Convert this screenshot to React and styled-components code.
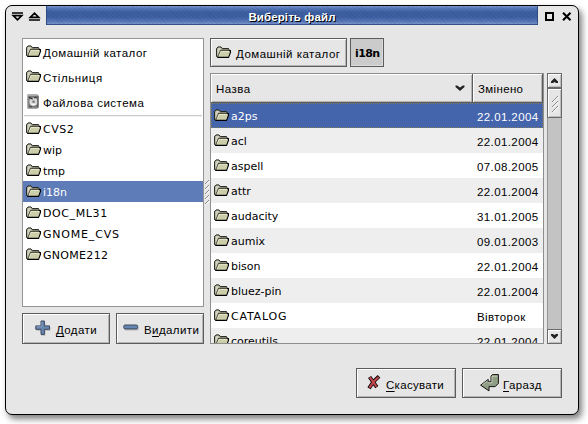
import React from "react";
import styled, { createGlobalStyle, css } from "styled-components";

const Global = createGlobalStyle`
  * { box-sizing: border-box; }
  html, body { margin: 0; background: #fff; }
  body { width: 588px; height: 424px; overflow: hidden; font: 11px "Liberation Sans", sans-serif; color: #000; cursor: default; }
`;

const Frame = styled.div`
  width: 574px;
  height: 410px;
  margin: 5px 0 0 5px;
  display: flex;
  flex-direction: column;
  background: #e6e6e6;
  border: 1px solid #000;
  border-radius: 7px;
  box-shadow: 3px 4px 6px rgba(0, 0, 0, 0.5);
  overflow: hidden;
`;

const TitleBar = styled.header`
  height: 19px;
  display: flex;
  flex: none;
`;

const Controls = styled.div`
  width: 40px;
  flex: none;
  display: flex;
`;

const Caption = styled.div`
  flex: 1;
  padding-top: 2px;
  text-align: center;
  font: bold 11.5px/18px "Liberation Sans", sans-serif;
  letter-spacing: 0.1px;
  color: #fff;
  text-shadow: 1px 1px 0 #000;
  border-left: 1px solid #2e4a86;
  border-right: 1px solid #2e4a86;
  border-bottom: 1px solid #34508c;
  background:
    repeating-linear-gradient(45deg, rgba(20, 45, 110, 0.1) 0 1px, transparent 1px 3px),
    linear-gradient(#7f9ace 0, #5a7bbb 2px, #3e5f9f 6px, #3d5fa0 11px, #5c7cba 16px, #7d97cb 18px);
`;

const Body = styled.main`
  flex: 1;
  padding: 13px 16px 16px;
  display: flex;
  flex-direction: column;
`;

const Panes = styled.div`
  display: grid;
  grid-template-columns: 182px 6px 352px;
  height: 306px;
`;

const SidePane = styled.section`
  display: flex;
  flex-direction: column;
  gap: 6px;
`;

const Places = styled.div`
  height: 269px;
  border: 1px solid #949494;
  background: #fff;
`;

const Divider = styled.div`
  height: 2px;
  margin: 1px 1px;
  background: #cbcbcb;
  border-bottom: 1px solid #f2f2f2;
`;

const Text = styled.span`
  white-space: nowrap;
  font-family: ${(p) => (p.$latin ? '"DejaVu Sans"' : '"Liberation Sans"')}, sans-serif;
  font-size: ${(p) => (p.$latin ? 11 : 11.5)}px;
  letter-spacing: ${(p) => p.$track || 0}px;
  line-height: 15px;
  padding-top: ${(p) => p.$drop || 0}px;
  ${(p) => p.$bold && css`font-weight: bold;`}
  u { text-underline-offset: 2px; text-decoration-thickness: 1px; text-decoration-skip-ink: none; }
`;

const PlaceRow = styled.div`
  height: ${(p) => (p.$tall ? 25 : 21)}px;
  display: flex;
  align-items: center;
  gap: 2px;
  padding-left: 3px;
  ${(p) => p.$selected && css`background: #5e7cb8; color: #fff;`}
`;

const ButtonPair = styled.div`
  display: grid;
  grid-template-columns: 88px 88px;
  gap: 6px;
`;

const Button = styled.button`
  height: ${(p) => p.$h || 31}px;
  width: ${(p) => (p.$w ? `${p.$w}px` : "auto")};
  padding: 0 0 0 ${(p) => p.$pad}px;
  display: flex;
  align-items: center;
  gap: ${(p) => p.$gap ?? 5}px;
  border: 1px solid #5c5c5c;
  border-radius: 0;
  background: ${(p) => (p.$active ? "#cbcbcb" : "#e6e6e6")};
  box-shadow: ${(p) =>
    p.$active ? "inset -1px -1px #dcdcdc" : "inset 1px 1px #fff, inset -1px -1px #b4b4b4"};
  color: #000;
`;

const Splitter = styled.div`
  display: flex;
  align-items: flex-start;
  padding: 142px 0 0 1px;
`;

const FilePane = styled.section`
  display: flex;
  flex-direction: column;
  gap: 6px;
`;

const PathBar = styled.nav`
  display: flex;
  gap: 3px;
`;

const Listing = styled.div`
  display: flex;
  justify-content: space-between;
  height: 271px;
`;

const Table = styled.div`
  width: 334px;
  border: 1px solid #8e8e8e;
  background: #fff;
  overflow: hidden;
`;

const HeadRow = styled.div`
  height: 29px;
  display: grid;
  grid-template-columns: 262px 70px;
`;

const HeadCell = styled.div`
  display: flex;
  align-items: center;
  justify-content: space-between;
  padding: 0 7px 0 5px;
  background: #e6e6e6;
  border-right: 1px solid #5c5c5c;
  border-bottom: 1px solid #5c5c5c;
  box-shadow: inset 1px 1px #fff, inset -1px -1px #b4b4b4;
`;

const FileRow = styled.div`
  height: 25px;
  display: grid;
  grid-template-columns: 263px 69px;
  align-items: center;
  background: ${(p) => (p.$odd ? "#eeeeee" : "#fff")};
  ${(p) => p.$selected && css`background: #4464ac; color: #fff; outline: 1px dotted #7a7a60; outline-offset: -1px;`}
`;

const NameCell = styled.div`
  display: flex;
  align-items: center;
  gap: 2px;
  padding-left: 3px;
`;

const DateCell = styled.div`
  display: flex;
  padding-left: 3px;
`;

const ScrollBar = styled.div`
  width: 15px;
  display: flex;
  flex-direction: column;
  background: #c3c3c3;
  border: solid #949494;
  border-width: 0 1px;
`;

const ScrollPart = styled.div`
  height: ${(p) => p.$h}px;
  margin: 0 -1px;
  margin-top: ${(p) => (p.$end ? "auto" : 0)};
  display: flex;
  align-items: center;
  justify-content: center;
  border: 1px solid #6a6a6a;
  background: #e6e6e6;
  box-shadow: inset 1px 1px #fff, inset -1px -1px #bdbdbd;
`;

const Actions = styled.footer`
  display: flex;
  justify-content: flex-end;
  gap: 6px;
  margin-top: 24px;
`;

const Icon = styled.svg`
  display: block;
  flex: none;
  overflow: visible;
  margin-top: ${(p) => p.$shift || 0}px;
`;

const Folder = ({ shift = 0 }) => (
  <Icon width="15" height="13" viewBox="0 0 15 13" $shift={shift}>
    <path d="M2 11.5L.5 10.5V2.5L2 .9H5L6.5 2.5H12.5L13.5 4.5H5Z" fill="#84866f" stroke="#1c1c18" strokeWidth=".9" />
    <path d="M1.3 9.5V3L2.4 1.7H4.6L6 3.4H4.6L3.6 5.2L2 9.8Z" fill="#d0d1be" />
    <path d="M5.3 4.6H14.3V6.2L12.6 11H3L2 10.6L4.3 5.2Z" fill="#cccea9" />
    <path d="M2.9 10L5 5.2H14" fill="none" stroke="#f1f2da" strokeWidth=".9" />
    <path d="M1.4 11.4H12.6L14.5 6.2V4.6H13" fill="none" stroke="#000" strokeWidth="1.1" strokeLinejoin="round" />
    <path d="M2 10.4L4.4 4.5H13" fill="none" stroke="#33342a" strokeWidth=".7" />
  </Icon>
);

const Disk = () => (
  <Icon width="15" height="15" viewBox="0 0 15 15" $shift={-1}>
    <path d="M1.5 .5H11L12.5 1.5V13.5L11.5 14.5H1.5Z" fill="#777" />
    <path d="M1.5 .5H11.5V2H1.5Z" fill="#aaa" />
    <path d="M2 3V14H11" fill="none" stroke="#9a9a9a" />
    <circle cx="7.4" cy="7.8" r="4" fill="#d8d8d8" />
    <path d="M4 9.5A4 4 0 0 0 10.5 10Z" fill="#f5f5f5" />
    <circle cx="7.6" cy="7.8" r="1.3" fill="#777" />
    <path d="M3 3.2L6.8 5.3M8 4L10.5 3" stroke="#333" strokeWidth="1.3" />
    <path d="M3.4 12.5L6 13" stroke="#444" />
    <path d="M12 2V13.5" stroke="#555" />
  </Icon>
);

const Plus = () => (
  <Icon width="16" height="16" viewBox="0 0 16 16" $shift={-2}>
    <path d="M6.4 2.4H10.4V7H15.5V11H10.4V15.7H6.4V11H1.4V7H6.4Z" fill="#999" opacity=".5" />
    <path d="M6 1H9.4V5.9H14.5V9.3H9.4V14.4H6V9.3H.8V5.9H6Z" fill="#6685b0" stroke="#3d4b60" strokeWidth="1" strokeLinejoin="round" />
    <path d="M6.9 1.8V6.8H1.7" fill="none" stroke="#92abcb" strokeWidth=".7" />
  </Icon>
);

const Minus = () => (
  <Icon width="16" height="7" viewBox="0 0 16 7" $shift={-3}>
    <rect x="1.5" y="2" width="14" height="4.4" rx="1.5" fill="#999" opacity=".6" />
    <rect x=".8" y="1" width="13.8" height="3.9" rx="1.2" fill="#6685b0" stroke="#3d4b60" strokeWidth="1" />
  </Icon>
);

const Cross = () => (
  <Icon width="14" height="15" viewBox="0 0 14 15" $shift={-1}>
    <path d="M2.6 2L9.8 12.2M12 1.4L6.5 6.6L2 13.2" fill="none" stroke="#000" strokeWidth="3.8" strokeLinejoin="round" />
    <path d="M2.9 2.4L9.5 11.7M11.6 2L6.6 6.8L2.4 12.6" fill="none" stroke="#c0484c" strokeWidth="2.2" />
  </Icon>
);

const Enter = () => (
  <Icon width="19" height="18" viewBox="0 0 19 18" $shift={-1}>
    <path d="M11 2L12.5 .6H18.4V9.4L15.2 12.6H9V16.9L.6 11.2L8.2 5.4V7.8H11Z" fill="#8f9d84" stroke="#111" strokeWidth="1" strokeLinejoin="round" />
    <path d="M12 2.2H17.4M12 2V8.8H7.7M7.5 6.9L2.2 11" fill="none" stroke="#c9d1bf" strokeWidth=".9" />
  </Icon>
);

const LeftControls = () => (
  <Icon width="40" height="19" viewBox="0 0 40 19">
    <g fill="none" stroke="#000" strokeWidth="1.7">
      <path d="M6 7H17M7.3 9.7H15.7L11.5 13.8Z" />
      <path d="M24.3 11.3H32.7L28.5 7.2ZM23 14H34" />
    </g>
  </Icon>
);

const RightControls = () => (
  <Icon width="40" height="19" viewBox="0 0 40 19">
    <path d="M8 7H15V14H8Z" fill="none" stroke="#000" strokeWidth="2" />
    <path d="M25 6.7L32.5 14.2M32.5 6.7L25 14.2" stroke="#000" strokeWidth="2.1" />
  </Icon>
);

const Chevron = () => (
  <Icon width="10" height="7" viewBox="0 0 10 7">
    <path d="M.5 .5L2.2 .5L5 2.6L7.8 .5H9.5V2L5 6L.5 2Z" fill="#222" />
  </Icon>
);

const Arrow = ({ down }) => (
  <Icon width="7" height="5" viewBox="0 0 7 5">
    <path d={down ? "M0 0H2L3.5 1L5 0H7V1.5L3.5 5L0 1.5Z" : "M3.5 0L7 3.5V5H5L3.5 4L2 5H0V3.5Z"} fill="#222" />
  </Icon>
);

const Grip = ({ n = 5, w = 4, step = 5 }) => (
  <Icon width={w} height={n * step} viewBox={`0 0 ${w} ${n * step}`}>
    {Array.from({ length: n }, (_, i) => (
      <g key={i}>
        <path d={`M1 ${i * step + w + 0.5}L${w + 0.5} ${i * step + 1}`} stroke="#fff" />
        <path d={`M0 ${i * step + w}L${w} ${i * step}`} stroke="#8c8c8c" />
      </g>
    ))}
  </Icon>
);

const roots = [
  { label: "Домашній каталог", track: 0.48, icon: <Folder shift={-1} /> },
  { label: "Стільниця", track: 0.6, icon: <Folder shift={-1} /> },
  { label: "Файлова система", track: 0.48, icon: <Disk /> },
];

const bookmarks = [
  ["CVS2", 0.5],
  ["wip", 0],
  ["tmp", 0],
  ["i18n", 0],
  ["DOC_ML31", 0.6],
  ["GNOME_CVS", 0.8],
  ["GNOME212", 0.3],
];

const files = [
  ["a2ps", "22.01.2004"],
  ["acl", "22.01.2004"],
  ["aspell", "07.08.2005"],
  ["attr", "22.01.2004"],
  ["audacity", "31.01.2005"],
  ["aumix", "09.01.2003"],
  ["bison", "22.01.2004"],
  ["bluez-pin", "22.01.2004"],
  ["CATALOG", "Вівторок", 0.8],
  ["coreutils", "22.01.2004"],
];

export default function App() {
  return (
    <>
      <Global />
      <Frame>
        <TitleBar>
          <Controls><LeftControls /></Controls>
          <Caption>Виберіть файл</Caption>
          <Controls><RightControls /></Controls>
        </TitleBar>
        <Body>
          <Panes>
            <SidePane>
              <Places>
                {roots.map((r) => (
                  <PlaceRow key={r.label} $tall>
                    {r.icon}
                    <Text $track={r.track} $drop={3}>{r.label}</Text>
                  </PlaceRow>
                ))}
                <Divider />
                {bookmarks.map(([name, track]) => (
                  <PlaceRow key={name} $selected={name === "i18n"}>
                    <Folder shift={-1} />
                    <Text $latin $drop={2} $track={track}>{name}</Text>
                  </PlaceRow>
                ))}
              </Places>
              <ButtonPair>
                <Button $pad={12}><Plus /><Text $track={0.4} $drop={4}><u>Д</u>одати</Text></Button>
                <Button $pad={6}><Minus /><Text $track={0.4} $drop={4}>В<u>и</u>далити</Text></Button>
              </ButtonPair>
            </SidePane>
            <Splitter><Grip /></Splitter>
            <FilePane>
              <PathBar>
                <Button $h={29} $w={137} $pad={5}>
                  <Folder />
                  <Text $track={0.48} $drop={3}>Домашній каталог</Text>
                </Button>
                <Button $h={29} $w={34} $pad={4} $active>
                  <Text $latin $bold $drop={2} $track={-0.6}>i18n</Text>
                </Button>
              </PathBar>
              <Listing>
                <Table>
                  <HeadRow>
                    <HeadCell><Text $track={0.5} $drop={3}>Назва</Text><Chevron /></HeadCell>
                    <HeadCell><Text $track={0.35} $drop={3}>Змінено</Text></HeadCell>
                  </HeadRow>
                  {files.map(([name, date, track], i) => (
                    <FileRow key={name} $odd={i % 2 === 1} $selected={i === 0}>
                      <NameCell><Folder shift={-1} /><Text $latin $drop={2} $track={track}>{name}</Text></NameCell>
                      <DateCell><Text $track={0.4} $drop={3}>{date}</Text></DateCell>
                    </FileRow>
                  ))}
                </Table>
                <ScrollBar>
                  <ScrollPart $h={15}><Arrow /></ScrollPart>
                  <ScrollPart $h={30}><Grip n={3} w={6} step={5} /></ScrollPart>
                  <ScrollPart $h={15} $end><Arrow down /></ScrollPart>
                </ScrollBar>
              </Listing>
            </FilePane>
          </Panes>
          <Actions>
            <Button $h={30} $w={100} $pad={10}><Cross /><Text $track={0.3} $drop={4}><u>С</u>касувати</Text></Button>
            <Button $h={30} $w={100} $pad={17} $gap={4}><Enter /><Text $track={0.4} $drop={4}><u>Г</u>аразд</Text></Button>
          </Actions>
        </Body>
      </Frame>
    </>
  );
}
